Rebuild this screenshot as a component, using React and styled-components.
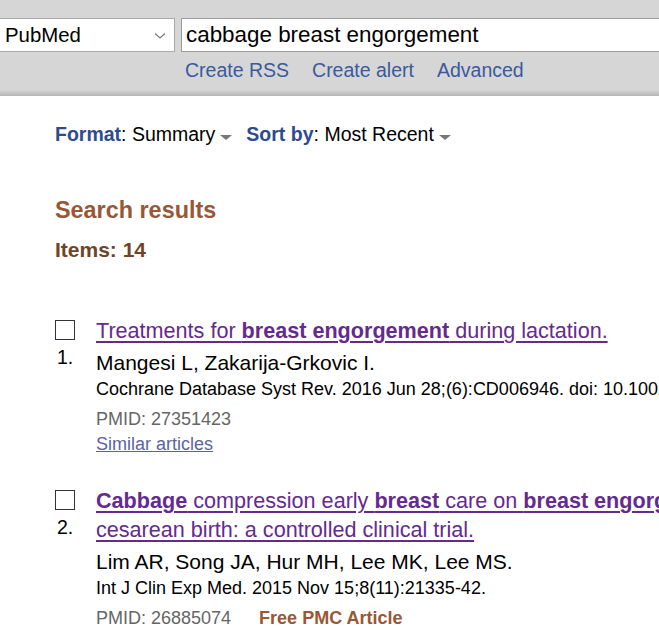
import { createGlobalStyle, styled } from "styled-components";

const GlobalStyle = createGlobalStyle`
  html, body {
    margin: 0;
    padding: 0;
    background: #fff;
    overflow: hidden;
  }
  body {
    font-family: "Liberation Sans", Arial, sans-serif;
    color: #000;
  }
`;

const results = [
  {
    n: 1,
    title: [
      ["Treatments for ", false],
      ["breast engorgement", true],
      [" during lactation.", false],
    ],
    authors: "Mangesi L, Zakarija-Grkovic I.",
    journal:
      "Cochrane Database Syst Rev. 2016 Jun 28;(6):CD006946. doi: 10.1002/14651858.CD006946.pub3. Review.",
    pmid: "27351423",
    similar: true,
  },
  {
    n: 2,
    title: [
      ["Cabbage", true],
      [" compression early ", false],
      ["breast", true],
      [" care on ", false],
      ["breast engorgement", true],
      [" in primiparous women after cesarean birth: a controlled clinical trial.", false],
    ],
    authors: "Lim AR, Song JA, Hur MH, Lee MK, Lee MS.",
    journal: "Int J Clin Exp Med. 2015 Nov 15;8(11):21335-42.",
    pmid: "26885074",
    freePmc: true,
  },
];

function App() {
  return (
    <Page>
      <GlobalStyle />
      <SearchBar>
        <SearchRow>
          <DbSelect>
            <span>PubMed</span>
            <svg width="12" height="8" viewBox="0 0 12 8">
              <path d="M1 1.5 L6 6 L11 1.5" fill="none" stroke="#777" strokeWidth="1.1" />
            </svg>
          </DbSelect>
          <TermInput>cabbage breast engorgement</TermInput>
        </SearchRow>
        <SearchLinks>
          <a>Create RSS</a>
          <a>Create alert</a>
          <a>Advanced</a>
        </SearchLinks>
      </SearchBar>

      <Content>
        <DisplayBar>
          <Setting>
            <b>Format</b>: Summary<Caret />
          </Setting>
          <Setting>
            <b>Sort by</b>: Most Recent<Caret />
          </Setting>
        </DisplayBar>

        <ResultsTitle>Search results</ResultsTitle>
        <ItemCount>Items: 14</ItemCount>

        <ResultList>
          {results.map((r) => (
            <Report key={r.n}>
              <Gutter>
                <Check />
                <Num>{r.n}.</Num>
              </Gutter>
              <Body>
                <Title>
                  {r.title.map(([t, hl], i) => (hl ? <b key={i}>{t}</b> : <span key={i}>{t}</span>))}
                </Title>
                <Authors>{r.authors}</Authors>
                <Journal>{r.journal}</Journal>
                <Aux>
                  <Pmid>PMID: {r.pmid}</Pmid>
                  {r.freePmc && <FreePmc>Free PMC Article</FreePmc>}
                </Aux>
                {r.similar && <Similar>Similar articles</Similar>}
              </Body>
            </Report>
          ))}
        </ResultList>
      </Content>
    </Page>
  );
}

const Page = styled.div`
  width: 1040px;
`;

const SearchBar = styled.div`
  height: 96px;
  box-sizing: border-box;
  padding-top: 18px;
  background: linear-gradient(
    to bottom,
    #d6d6d6 0,
    #d6d6d6 90px,
    #c4c4c4 93px,
    #b6b6b6 96px
  );
`;

const SearchRow = styled.div`
  display: flex;
  gap: 6px;
  height: 34px;
`;

const DbSelect = styled.div`
  width: 176px;
  margin-left: -1px;
  box-sizing: border-box;
  border: 1px solid #a9a9a9;
  background: #fff;
  display: flex;
  align-items: center;
  justify-content: space-between;
  padding: 0 8px 0 5px;
  font-size: 20.4px;

  svg {
    margin-top: 1px;
  }
`;

const TermInput = styled.div`
  flex: 1;
  box-sizing: border-box;
  border: 1px solid #9c9c9c;
  background: #fff;
  display: flex;
  align-items: center;
  padding-left: 4px;
  font-size: 22.4px;
`;

const SearchLinks = styled.div`
  display: flex;
  gap: 23px;
  margin: 6px 0 0 185px;
  font-size: 19.5px;
  line-height: 24px;

  a {
    color: #3a5a9c;
    cursor: pointer;
  }
`;

const Content = styled.div`
  padding: 0 0 0 55px;
`;

const DisplayBar = styled.div`
  display: flex;
  gap: 14px;
  margin-top: 26px;
  font-size: 19.5px;
  line-height: 24px;
`;

const Setting = styled.div`
  display: flex;
  align-items: center;
  white-space: pre;

  b {
    color: #2d4b8e;
  }
`;

const Caret = styled.span`
  display: inline-block;
  margin: 6px 0 0 5px;
  width: 0;
  height: 0;
  border-left: 6px solid transparent;
  border-right: 6px solid transparent;
  border-top: 5px solid #777;
`;

const ResultsTitle = styled.h2`
  margin: 50px 0 0;
  font-size: 23.4px;
  line-height: 28px;
  color: #985735;
  font-weight: bold;
`;

const ItemCount = styled.h3`
  margin: 13px 0 0;
  font-size: 21px;
  line-height: 26px;
  color: #6f4526;
  font-weight: bold;
`;

const ResultList = styled.div`
  margin-top: 53px;
  display: flex;
  flex-direction: column;
  gap: 30px;
`;

const Report = styled.div`
  display: flex;
`;

const Gutter = styled.div`
  width: 41px;
  flex: none;
  display: flex;
  flex-direction: column;
  padding-top: 4px;
`;

const Check = styled.span`
  display: block;
  width: 20px;
  height: 20px;
  box-sizing: border-box;
  border: 1.5px solid #333;
  background: #fff;
`;

const Num = styled.span`
  margin: 5px 0 0 2px;
  font-size: 19.5px;
  line-height: 24px;
`;

const Body = styled.div`
  width: 910px;
`;

const Title = styled.a`
  display: block;
  color: #642a8f;
  text-decoration: underline;
  text-underline-offset: 3px;
  font-size: 21.6px;
  line-height: 29px;
  cursor: pointer;
`;

const Authors = styled.div`
  font-size: 21px;
  line-height: 28px;
  margin-top: 4px;
`;

const Journal = styled.div`
  font-size: 18px;
  line-height: 24px;
`;

const Aux = styled.div`
  display: flex;
  gap: 28px;
  margin-top: 6px;
  font-size: 18px;
  line-height: 24px;
`;

const Pmid = styled.span`
  color: #666;
`;

const FreePmc = styled.span`
  color: #985735;
  font-weight: bold;
`;

const Similar = styled.a`
  display: block;
  margin-top: 1px;
  color: #5d62a8;
  text-decoration: underline;
  font-size: 18px;
  line-height: 24px;
  cursor: pointer;
`;

export default App;
